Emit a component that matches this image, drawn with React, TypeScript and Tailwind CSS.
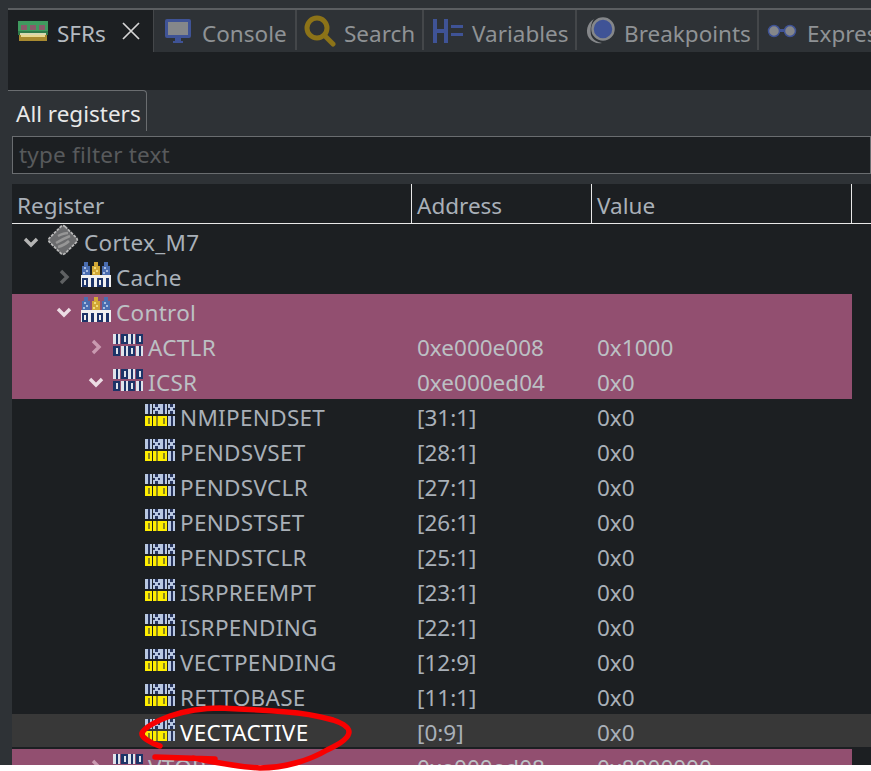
import type { ReactNode } from "react";

const font = "font-['Noto_Sans',sans-serif]";

function RamIcon() {
  return (
    <svg width="30" height="20" viewBox="0 0 30 20" shapeRendering="crispEdges" className="shrink-0">
      <rect x="0" y="0" width="30" height="14" fill="#3f9a5f" />
      <rect x="0" y="10" width="30" height="4" fill="#2f7a4a" />
      <rect x="3" y="4" width="6" height="5" fill="#8a5a6a" />
      <rect x="12" y="4" width="6" height="5" fill="#8a5a6a" />
      <rect x="21" y="4" width="6" height="5" fill="#8a5a6a" />
      <rect x="2" y="12" width="26" height="2" fill="#d8d8b0" />
      <rect x="1" y="14" width="28" height="6" fill="#a88a30" />
      <rect x="3" y="14" width="24" height="2" fill="#e8d890" />
    </svg>
  );
}

function MonitorIcon() {
  return (
    <svg width="26" height="24" viewBox="0 0 26 24" className="shrink-0">
      <rect x="0" y="0" width="26" height="19" rx="2" fill="#3f5396" />
      <rect x="3" y="3" width="20" height="13" fill="#85878a" />
      <rect x="10" y="19" width="6" height="3" fill="#3f5396" />
      <rect x="8" y="22" width="10" height="2" fill="#3f5396" />
    </svg>
  );
}

function SearchIcon() {
  return (
    <svg width="32" height="32" viewBox="0 0 32 32" fill="none" stroke="#8c7318" strokeLinecap="round" className="shrink-0">
      <circle cx="13" cy="13" r="10" strokeWidth="5" />
      <path d="M21 21l8 8" strokeWidth="5" />
    </svg>
  );
}

function VarIcon() {
  return (
    <svg width="30" height="24" viewBox="0 0 30 24" fill="#3f5396" shapeRendering="crispEdges" className="shrink-0">
      <rect x="0" y="0" width="4" height="24" />
      <rect x="11" y="0" width="4" height="24" />
      <rect x="4" y="10" width="7" height="4" />
      <rect x="18" y="6" width="12" height="3" />
      <rect x="18" y="14" width="12" height="3" />
    </svg>
  );
}

function BreakpointIcon() {
  return (
    <svg width="30" height="28" viewBox="0 0 30 28" className="shrink-0">
      <path d="M9 2C2 6 0 15 4 21c3 4 8 6 13 5-5-1-9-3-11-8C5 12 6 6 9 2z" fill="#85878a" />
      <circle cx="18" cy="12" r="10.5" fill="#3f5396" stroke="#85878a" strokeWidth="2.5" />
    </svg>
  );
}

function GlassesIcon() {
  return (
    <svg width="30" height="14" viewBox="0 0 30 14" className="shrink-0">
      <rect x="10" y="5" width="10" height="3" fill="#3f5396" />
      <circle cx="7" cy="7" r="5.5" fill="#85878a" stroke="#3f5396" strokeWidth="1.5" />
      <circle cx="23" cy="7" r="5.5" fill="#85878a" stroke="#3f5396" strokeWidth="1.5" />
    </svg>
  );
}

function CloseIcon() {
  return (
    <svg width="20" height="20" viewBox="0 0 20 20" stroke="#d6d6d6" strokeWidth="1.7" className="ml-[15px] shrink-0">
      <path d="M2 2l16 16M18 2L2 18" />
    </svg>
  );
}

function ChipIcon() {
  return (
    <svg width="32" height="32" viewBox="0 0 32 32" className="shrink-0">
      <rect x="5" y="5" width="22" height="22" rx="3" transform="rotate(45 16 16)" fill="#6a6b6d" stroke="#b8b8b8" strokeWidth="1.8" strokeDasharray="3 1" />
      <path d="M11 12c4-2 7-3 10-3M9 19c5-3 9-5 14-7M11 23c4-1 8-3 11-6" stroke="#969696" strokeWidth="2.5" fill="none" />
    </svg>
  );
}

function GroupIcon() {
  return (
    <svg width="30" height="25" viewBox="0 0 30 25" shapeRendering="crispEdges" className="shrink-0">
      {[0, 10, 20].map((x) => (
        <g key={x} fill={x === 10 ? "#d2a835" : "#4a6db0"}>
          <rect x={x + 3} y="0" width="4" height="4" />
          <rect x={x + 1} y="4" width="8" height="9" />
          <rect x={x + 3} y="5" width="2" height="2" fill={x === 10 ? "#f2dc7a" : "#a8bce0"} />
          <rect x={x + 5} y="8" width="2" height="2" fill={x === 10 ? "#f2dc7a" : "#a8bce0"} />
          <rect x={x + 2} y="10" width="2" height="2" fill={x === 10 ? "#f2dc7a" : "#a8bce0"} />
        </g>
      ))}
      <rect x="0" y="13" width="30" height="12" fill="#f0f0f0" />
      {[1, 16].map((x) => (
        <g key={x} fill="#1d3468">
          <rect x={x} y="16" width="6" height="9" />
          <rect x={x + 2} y="18" width="2" height="5" fill="#f0f0f0" />
          <rect x={x + 9} y="16" width="3" height="9" />
        </g>
      ))}
    </svg>
  );
}

// one binary digit cell of the pixel icons: "1" is a bar, "0" a block with a slot
function Digit({ x, y, kind, ink, paper }: { x: number; y: number; kind: "0" | "1"; ink: string; paper: string }) {
  return (
    <g>
      <rect x={x} y={y} width="7" height="10" fill={paper} />
      {kind === "1" ? (
        <rect x={x + 2.5} y={y} width="2" height="10" fill={ink} />
      ) : (
        <rect x={x + 2.5} y={y + 2} width="2" height="6" fill={ink} />
      )}
    </g>
  );
}

// the "x" cell on the top row of a field icon
function Cross({ x, y, pale, dark }: { x: number; y: number; pale: string; dark: string }) {
  return (
    <g>
      <rect x={x} y={y} width="7" height="10" fill={pale} />
      <rect x={x + 2} y={y} width="3" height="3" fill={dark} />
      <rect x={x + 2} y={y + 7} width="3" height="3" fill={dark} />
      <rect x={x} y={y + 4} width="2" height="2" fill={dark} />
      <rect x={x + 5} y={y + 4} width="2" height="2" fill={dark} />
    </g>
  );
}

function RegisterIcon() {
  const ink = "#1d3468";
  const paper = "#dfe3ea";
  return (
    <svg width="30" height="22" viewBox="0 0 30 22" shapeRendering="crispEdges" className="shrink-0">
      <Digit x={0} y={0} kind="1" ink={ink} paper={paper} />
      <Digit x={8} y={0} kind="0" ink={paper} paper={ink} />
      <Digit x={15} y={0} kind="1" ink={ink} paper={paper} />
      <Digit x={23} y={0} kind="0" ink={paper} paper={ink} />
      <Digit x={0} y={12} kind="0" ink={paper} paper={ink} />
      <Digit x={8} y={12} kind="1" ink={ink} paper={paper} />
      <Digit x={15} y={12} kind="0" ink={paper} paper={ink} />
      <Digit x={23} y={12} kind="1" ink={ink} paper={paper} />
    </svg>
  );
}

function FieldIcon() {
  const ink = "#27345c";
  const paper = "#b9c8e2";
  const yellow = "#ffee00";
  return (
    <svg width="30" height="22" viewBox="0 0 30 22" shapeRendering="crispEdges" className="shrink-0">
      <Digit x={0} y={0} kind="1" ink={ink} paper={paper} />
      <Cross x={8} y={0} pale={paper} dark={ink} />
      <Digit x={15} y={0} kind="1" ink={ink} paper={paper} />
      <Cross x={23} y={0} pale={paper} dark={ink} />
      <Digit x={0} y={12} kind="0" ink="#8a8420" paper={yellow} />
      <Digit x={8} y={12} kind="1" ink="#8a8420" paper={yellow} />
      <Digit x={15} y={12} kind="0" ink="#8a8420" paper={yellow} />
      <Digit x={23} y={12} kind="1" ink={ink} paper={paper} />
    </svg>
  );
}

function Chevron({ open, className }: { open: boolean; className: string }) {
  return (
    <svg width="16" height="16" viewBox="0 0 16 16" fill="none" strokeWidth="3.4" stroke="currentColor" className={className}>
      {open ? <path d="M2 5l6 6 6-6" /> : <path d="M5 2l6 6-6 6" />}
    </svg>
  );
}

function Tab({ icon, label, box, gap }: { icon: ReactNode; label: string; box: string; gap: string }) {
  return (
    <div className={`h-[40px] shrink-0 border-r-2 border-[#44474a] ${box}`}>
      <div className={`flex h-[42px] items-center ${gap}`}>
        {icon}
        <span className="whitespace-nowrap pt-[6px] text-[#8f9295]">{label}</span>
      </div>
    </div>
  );
}

type Row = {
  indent: number;
  name: string;
  address?: string;
  value?: string;
  icon: "chip" | "group" | "reg" | "field";
  chevron?: "open" | "closed";
  tone?: "pink" | "selected";
};

const rows: Row[] = [
  { indent: 0, name: "Cortex_M7", icon: "chip", chevron: "open" },
  { indent: 1, name: "Cache", icon: "group", chevron: "closed" },
  { indent: 1, name: "Control", icon: "group", chevron: "open", tone: "pink" },
  { indent: 2, name: "ACTLR", address: "0xe000e008", value: "0x1000", icon: "reg", chevron: "closed", tone: "pink" },
  { indent: 2, name: "ICSR", address: "0xe000ed04", value: "0x0", icon: "reg", chevron: "open", tone: "pink" },
  { indent: 3, name: "NMIPENDSET", address: "[31:1]", value: "0x0", icon: "field" },
  { indent: 3, name: "PENDSVSET", address: "[28:1]", value: "0x0", icon: "field" },
  { indent: 3, name: "PENDSVCLR", address: "[27:1]", value: "0x0", icon: "field" },
  { indent: 3, name: "PENDSTSET", address: "[26:1]", value: "0x0", icon: "field" },
  { indent: 3, name: "PENDSTCLR", address: "[25:1]", value: "0x0", icon: "field" },
  { indent: 3, name: "ISRPREEMPT", address: "[23:1]", value: "0x0", icon: "field" },
  { indent: 3, name: "ISRPENDING", address: "[22:1]", value: "0x0", icon: "field" },
  { indent: 3, name: "VECTPENDING", address: "[12:9]", value: "0x0", icon: "field" },
  { indent: 3, name: "RETTOBASE", address: "[11:1]", value: "0x0", icon: "field" },
  { indent: 3, name: "VECTACTIVE", address: "[0:9]", value: "0x0", icon: "field", tone: "selected" },
  { indent: 2, name: "VTOR", address: "0xe000ed08", value: "0x8000000", icon: "reg", chevron: "closed", tone: "pink" },
];

const paddings = ["pl-[9px]", "pl-[42px]", "pl-[74px]", "pl-[74px]"];
const iconGaps = ["ml-[6px]", "ml-[7px]", "ml-[7px]", "ml-[39px]"];

function TreeRow({ row }: { row: Row }) {
  const pink = row.tone === "pink";
  const selected = row.tone === "selected";
  const cell = pink ? "text-[#bcc0c4]" : "text-[#a9b0b8]";
  const icon =
    row.icon === "chip" ? <ChipIcon /> : row.icon === "group" ? <GroupIcon /> : row.icon === "reg" ? <RegisterIcon /> : <FieldIcon />;
  return (
    <div className={`h-[35px] w-full shrink-0 ${selected ? "border-b-2 border-[#1c1f22] bg-[#383838]" : ""}`}>
      <div className={`flex h-[35px] w-[840px] items-center ${pink ? "bg-[#924f70]" : ""} ${cell}`}>
        <div className={`flex h-full w-[400px] shrink-0 items-center ${paddings[row.indent]}`}>
          <div className="flex w-[20px] shrink-0 justify-center">
            {row.chevron && (
              <Chevron
                open={row.chevron === "open"}
                className={
                  row.chevron === "closed"
                    ? pink
                      ? "text-[#c99ab0]"
                      : "text-[#5f6163]"
                    : pink
                      ? "text-[#ecdde4]"
                      : "text-[#b4b4b4]"
                }
              />
            )}
          </div>
          <div className={`mb-[4px] flex shrink-0 ${iconGaps[row.indent]}`}>{icon}</div>
          <span className={`ml-[5px] whitespace-nowrap pt-[4px] tracking-[0.3px] ${selected ? "text-white" : ""}`}>{row.name}</span>
        </div>
        <div className="w-[180px] shrink-0 pt-[4px] pl-[5px]">{row.address}</div>
        <div className="pt-[4px] pl-[5px]">{row.value}</div>
      </div>
    </div>
  );
}

export default function App() {
  return (
    <div className={`h-[771px] w-[871px] overflow-hidden bg-white text-[22.5px] leading-none ${font}`}>
      <div className="flex h-[765px] flex-col overflow-hidden bg-[#2e3236]">
        {/* view tabs */}
        <div className="mt-[8px] ml-[8px] flex h-[44px] shrink-0 border-t-2 border-[#5b5e61]">
          <div className="flex h-full w-[146px] shrink-0 items-center border-r border-[#44474a] bg-[#1c1f22] pl-[10px]">
            <RamIcon />
            <span className="ml-[9px] pt-[6px] text-[#b4bac0]">SFRs</span>
            <CloseIcon />
          </div>
          <Tab icon={<MonitorIcon />} label="Console" box="w-[143px] pl-[11px]" gap="gap-[11px]" />
          <Tab icon={<SearchIcon />} label="Search" box="w-[127px] pl-[7px]" gap="gap-[8px]" />
          <Tab icon={<VarIcon />} label="Variables" box="w-[153px] pl-[9px]" gap="gap-[9px]" />
          <Tab icon={<BreakpointIcon />} label="Breakpoints" box="w-[182px] pl-[8px]" gap="gap-[9px]" />
          <Tab icon={<GlassesIcon />} label="Expressions" box="w-[170px] pl-[8px] border-r-0" gap="gap-[10px]" />
        </div>
        {/* toolbar strip */}
        <div className="ml-[8px] h-[38px] shrink-0 bg-[#1c1f22]" />
        {/* panel */}
        <div className="flex h-[41px] shrink-0 pl-[8px]">
          <div className="flex w-[139px] items-center rounded-tr-[4px] border-t border-r border-[#6a6d70] pt-[6px] pl-[8px] text-[#e8e8e8]">
            All registers
          </div>
        </div>
        <div className="mt-[5px] ml-[12px] flex h-[38px] shrink-0 items-center border border-[#6a6d70] bg-[#1c1f22] pl-[6px] tracking-[0.2px] text-[#585a5c]">
          type filter text
        </div>
        <div className="mt-[10px] ml-[12px] flex min-h-0 flex-1 flex-col bg-[#1c1f22]">
          <div className="flex h-[40px] shrink-0 border-b border-[#e8e8e8] text-[#a9b0b8]">
            <div className="flex w-[400px] items-center border-r border-[#e8e8e8] pt-[6px] pl-[5px]">Register</div>
            <div className="flex w-[180px] items-center border-r border-[#e8e8e8] pt-[6px] pl-[5px]">Address</div>
            <div className="flex w-[260px] items-center border-r border-[#e8e8e8] pt-[6px] pl-[5px]">Value</div>
          </div>
          <div className="flex flex-col">
            {rows.map((row) => (
              <TreeRow key={row.name} row={row} />
            ))}
          </div>
        </div>
      </div>
      {/* hand-drawn red marker around the selected row */}
      <svg width="871" height="771" viewBox="0 0 871 771" className="pointer-events-none absolute top-0 left-0" fill="none">
        <path
          d="M155 757l60 2 M193 758c20 4 45 9 67 10 25 0 50-8 67-18 13-6 22-12 22-18 0-5-7-9-16-12-15-4-30-7-46-8-25-2-45-3-67-4-18 0-35 3-50 8-14 5-26 12-28 17-1 4 8 10 18 13"
          stroke="#f80000"
          strokeWidth="5.5"
          strokeLinecap="round"
          strokeLinejoin="round"
        />
      </svg>
    </div>
  );
}
